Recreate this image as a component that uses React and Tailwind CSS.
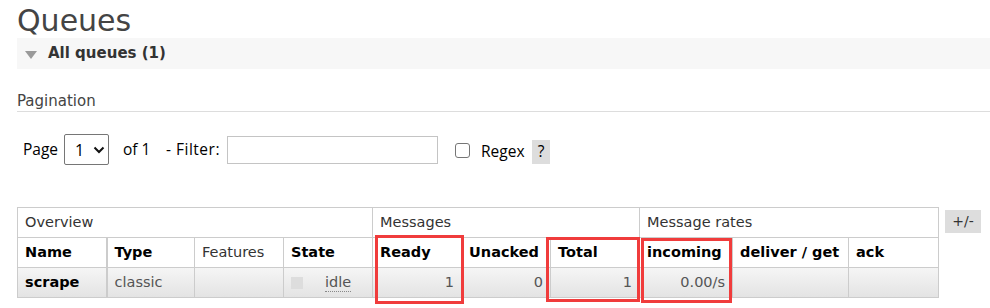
import React from 'react';

const verdana = { fontFamily: '"DejaVu Sans", Verdana, sans-serif' };

function RedBox({ className }) {
  return <div className={`absolute border-[3px] border-[#f03c3c] pointer-events-none ${className}`} />;
}

export default function App() {
  const cell = 'border border-[#cccccc] px-[7px] text-left align-middle';
  return (
    <div className="relative w-[990px] h-[308px] overflow-hidden bg-white text-[#444]" style={verdana}>
      <div className="pl-[17px]">
        {/* Title */}
        <div className="h-[38px]">
          <h1 className="text-[30px] leading-[42px] text-[#444] font-normal">Queues</h1>
        </div>

        {/* Section bar */}
        <div className="h-[31px] bg-[#f7f7f7] flex items-center pl-[8px] gap-[11px]">
          <svg width="12" height="8" viewBox="0 0 12 8" className="mt-[2px]">
            <polygon points="0,0 12,0 6,8" fill="#9a9a9a" />
          </svg>
          <span className="text-[15px] font-bold text-[#333]">All queues (1)</span>
        </div>

        {/* Pagination heading */}
        <div className="mt-[22px] h-[21px] border-b border-[#dddddd] text-[15px] leading-[20px] text-[#444]">Pagination</div>

        {/* Pagination row */}
        <div className="mt-[22px] flex items-center h-[31px] text-[15.5px] text-black whitespace-nowrap" style={{ fontFamily: '"Open Sans", "Noto Sans", sans-serif' }}>
          <span className="ml-[6px] w-[35px] shrink-0">Page</span>
          <div className="ml-[6px] w-[45px] h-[31px] shrink-0 border border-[#767676] rounded-[2px] flex items-center pl-[10px] gap-[9px]">
            <span className="text-[16px]">1</span>
            <svg width="12" height="8" viewBox="0 0 12 8">
              <path d="M1.5 1.5 L6 6 L10.5 1.5" fill="none" stroke="#111" strokeWidth="2" />
            </svg>
          </div>
          <span className="ml-[14px] w-[28px] shrink-0">of 1</span>
          <span className="ml-[15px] w-[54px] shrink-0 tracking-[0.5px]">- Filter:</span>
          <div className="ml-[7px] w-[211px] h-[28px] shrink-0 border border-[#c4c4c4]" />
          <div className="ml-[17px] mt-[2px] w-[15px] h-[15px] shrink-0 border border-[#767676] rounded-[3px]" />
          <span className="ml-[11px] mt-[4px] w-[45px] shrink-0">Regex</span>
          <span className="ml-[6px] mt-[4px] w-[18px] h-[24px] shrink-0 bg-[#dddddd] flex items-center justify-center">?</span>
        </div>

        {/* Table */}
        <div className="mt-[42px] flex items-start">
          <table className="border-collapse text-[14.5px] table-fixed w-[921px]">
            <colgroup>
              <col className="w-[89px]" />
              <col className="w-[88px]" />
              <col className="w-[89px]" />
              <col className="w-[89px]" />
              <col className="w-[89px]" />
              <col className="w-[89px]" />
              <col className="w-[89px]" />
              <col className="w-[93px]" />
              <col className="w-[116px]" />
              <col className="w-[90px]" />
            </colgroup>
            <thead>
              <tr className="h-[30px]">
                <th colSpan={4} className={`${cell} font-normal text-[#333]`}>Overview</th>
                <th colSpan={3} className={`${cell} font-normal text-[#333]`}>Messages</th>
                <th colSpan={3} className={`${cell} font-normal text-[#333]`}>Message rates</th>
              </tr>
              <tr className="h-[30px]">
                <th className={`${cell} border-r-2 font-bold text-black`}>Name</th>
                <th className={`${cell} font-bold text-black`}>Type</th>
                <th className={`${cell} font-normal text-[#333]`}>Features</th>
                <th className={`${cell} font-bold text-black`}>State</th>
                <th className={`${cell} font-bold text-black`}>Ready</th>
                <th className={`${cell} font-bold text-black`}>Unacked</th>
                <th className={`${cell} font-bold text-black`}>Total</th>
                <th className={`${cell} font-bold text-black`}>incoming</th>
                <th className={`${cell} font-bold text-black`}>deliver / get</th>
                <th className={`${cell} font-bold text-black`}>ack</th>
              </tr>
            </thead>
            <tbody>
              <tr className="h-[30px] bg-gradient-to-b from-[#f5f5f5] to-[#e3e3e3] text-[#555]">
                <td className={`${cell} border-r-2 font-bold text-black`}>scrape</td>
                <td className={cell}>classic</td>
                <td className={cell}></td>
                <td className={cell}>
                  <div className="flex items-center">
                    <span className="w-[12px] h-[12px] bg-[#dddddd]" />
                    <span className="ml-[22px] border-b border-dotted border-[#888] leading-[17px]">idle</span>
                  </div>
                </td>
                <td className={`${cell} text-right`}>1</td>
                <td className={`${cell} text-right`}>0</td>
                <td className={`${cell} text-right`}>1</td>
                <td className={`${cell} text-right`}>0.00/s</td>
                <td className={cell}></td>
                <td className={cell}></td>
              </tr>
            </tbody>
          </table>
          <span className="ml-[6px] mt-[3px] w-[36px] h-[23px] bg-[#dddddd] flex items-center justify-center text-[14px] text-[#333]">+/-</span>
        </div>
      </div>

      {/* Annotation boxes */}
      <RedBox className="left-[375px] top-[235px] w-[89px] h-[69px]" />
      <RedBox className="left-[546px] top-[237px] w-[94px] h-[65px]" />
      <RedBox className="left-[641px] top-[238px] w-[91px] h-[65px]" />
    </div>
  );
}
